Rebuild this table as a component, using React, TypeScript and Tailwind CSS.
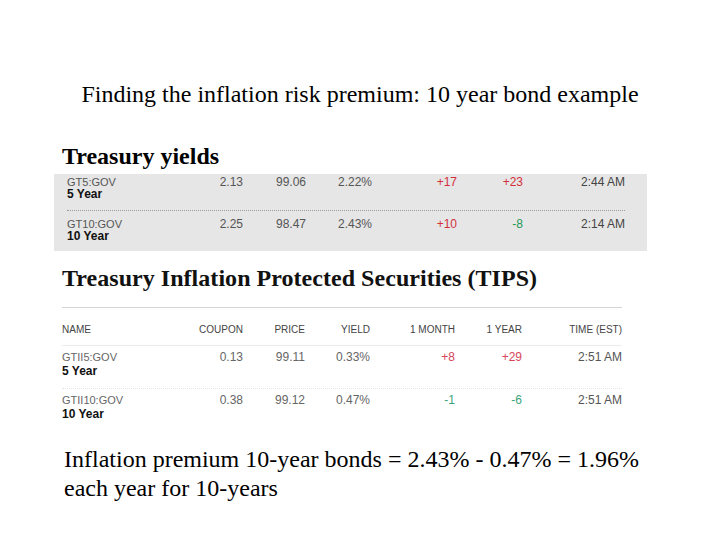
import React from "react"

interface Quote {
  ticker: string
  label: string
  coupon: string
  price: string
  yld: string
  month: string
  year: string
  time: string
}

const treasuries: Quote[] = [
  { ticker: "GT5:GOV", label: "5 Year", coupon: "2.13", price: "99.06", yld: "2.22%", month: "+17", year: "+23", time: "2:44 AM" },
  { ticker: "GT10:GOV", label: "10 Year", coupon: "2.25", price: "98.47", yld: "2.43%", month: "+10", year: "-8", time: "2:14 AM" },
]

const tips: Quote[] = [
  { ticker: "GTII5:GOV", label: "5 Year", coupon: "0.13", price: "99.11", yld: "0.33%", month: "+8", year: "+29", time: "2:51 AM" },
  { ticker: "GTII10:GOV", label: "10 Year", coupon: "0.38", price: "99.12", yld: "0.47%", month: "-1", year: "-6", time: "2:51 AM" },
]

const serif = { fontFamily: '"Liberation Serif", "Times New Roman", serif' }
const sans = { fontFamily: '"Liberation Sans", Arial, sans-serif' }

function changeColor(v: string, strong: boolean) {
  if (v.startsWith("+")) return strong ? "text-[#d42f3c]" : "text-[#d6455a]"
  return strong ? "text-[#27985a]" : "text-[#3ba37a]"
}

export default function App() {
  return (
    <div className="w-[720px] h-[540px] bg-white overflow-hidden text-black" style={serif}>
      {/* Slide title */}
      <h1 className="pt-[80px] text-center text-[24px] leading-[28px] font-normal">
        Finding the inflation risk premium: 10 year bond example
      </h1>

      <h2 className="mt-[34px] ml-[62px] text-[24px] leading-[28px] font-bold">Treasury yields</h2>

      {/* Treasury yields screenshot */}
      <div className="mt-[4px] ml-[54px] w-[593px] bg-[#e6e6e6] pl-[13px] pr-[22px] pt-[2px] pb-[8px]" style={sans}>
        {treasuries.map((q, i) => (
          <div
            key={q.ticker}
            className={i === 0 ? "pb-[9px] border-b border-dotted border-[#9a9a9a]" : "pt-[7px]"}
          >
            <div className="flex text-[12px] leading-[12px] text-[#555]">
              <div className="w-[115px] text-[11px]">{q.ticker}</div>
              <div className="w-[61px] text-right">{q.coupon}</div>
              <div className="w-[63px] text-right">{q.price}</div>
              <div className="w-[66px] text-right">{q.yld}</div>
              <div className={`w-[85px] text-right ${changeColor(q.month, true)}`}>{q.month}</div>
              <div className={`w-[66px] text-right ${changeColor(q.year, true)}`}>{q.year}</div>
              <div className="w-[102px] text-right text-[#444]">{q.time}</div>
            </div>
            <div className="text-[12px] leading-[13px] font-bold text-[#111]">{q.label}</div>
          </div>
        ))}
      </div>

      {/* TIPS screenshot */}
      <div className="mt-[14px] ml-[62px] w-[560px]">
        <h3 className="text-[24px] leading-[26px] font-bold tracking-[0.04px] text-[#111] pb-[16px] border-b border-[#d4d4d4]">
          Treasury Inflation Protected Securities (TIPS)
        </h3>

        <div style={sans}>
          <div className="flex pt-[16px] pb-[9px] text-[10px] leading-[12px] text-[#444] border-b border-[#ececec]">
            <div className="w-[120px]">NAME</div>
            <div className="w-[61px] text-right">COUPON</div>
            <div className="w-[62px] text-right">PRICE</div>
            <div className="w-[65px] text-right">YIELD</div>
            <div className="w-[85px] text-right">1 MONTH</div>
            <div className="w-[67px] text-right">1 YEAR</div>
            <div className="w-[100px] text-right">TIME (EST)</div>
          </div>

          {tips.map((q, i) => (
            <div
              key={q.ticker}
              className={i === 0 ? "pt-[5px] pb-[9px] border-b border-dotted border-[#e4e4e4]" : "pt-[5px]"}
            >
              <div className="flex text-[12px] leading-[12px] text-[#666]">
                <div className="w-[120px] text-[11px]">{q.ticker}</div>
                <div className="w-[61px] text-right">{q.coupon}</div>
                <div className="w-[62px] text-right">{q.price}</div>
                <div className="w-[65px] text-right">{q.yld}</div>
                <div className={`w-[85px] text-right ${changeColor(q.month, false)}`}>{q.month}</div>
                <div className={`w-[67px] text-right ${changeColor(q.year, false)}`}>{q.year}</div>
                <div className="w-[100px] text-right text-[#555]">{q.time}</div>
              </div>
              <div className="text-[12px] leading-[16px] font-bold text-[#111]">{q.label}</div>
            </div>
          ))}
        </div>
      </div>

      {/* Conclusion */}
      <p className="mt-[23px] ml-[64px] text-[24px] leading-[29px]">
        Inflation premium 10-year bonds = 2.43% - 0.47% = 1.96%
        <br />
        each year for 10-years
      </p>
    </div>
  )
}
